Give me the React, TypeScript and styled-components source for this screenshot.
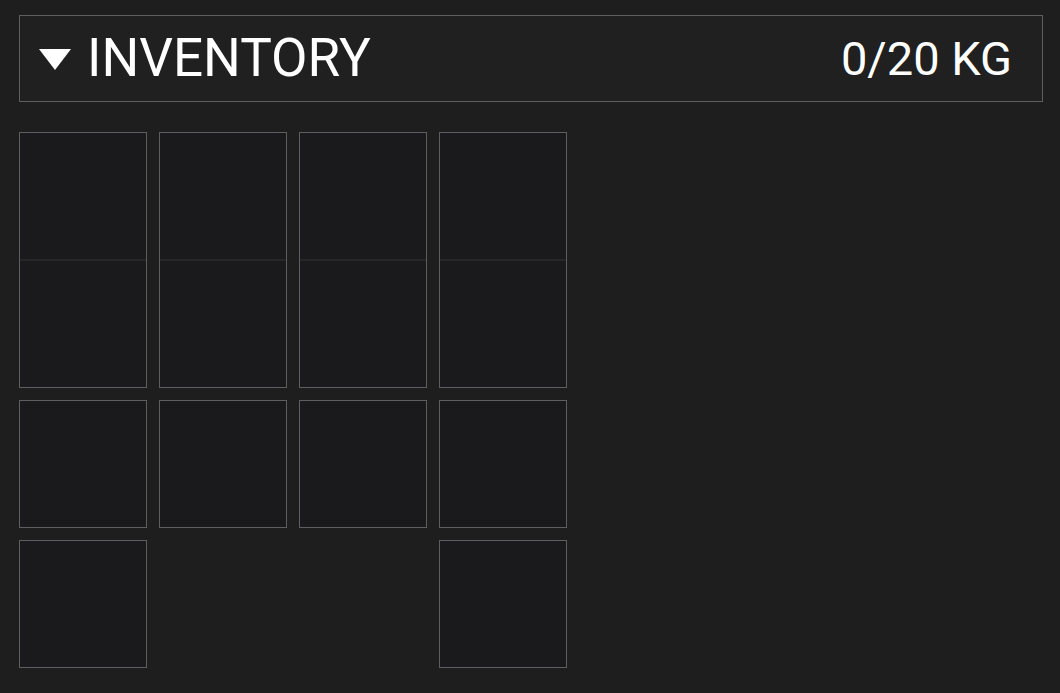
import React from 'react';
import styled, { createGlobalStyle } from 'styled-components';

const GlobalStyle = createGlobalStyle`
	html, body {
		margin: 0;
		padding: 0;
		background-color: #1e1e1e;
		font-family: Roboto, 'Liberation Sans', sans-serif;
	}
`;

// Styled components
const PageContainer = styled.div`
	width: 1060px;
	height: 693px;
	box-sizing: border-box;
	padding: 15px 17px 0 19px;
	background-color: #1e1e1e;
`;

const Header = styled.div`
	display: flex;
	align-items: center;
	justify-content: space-between;
	height: 87px;
	box-sizing: border-box;
	padding: 0 30px 0 19px;
	background-color: #202020;
	border: 1px solid #5e5e5e;
`;

const TitleGroup = styled.div`
	display: flex;
	align-items: center;
	gap: 16px;
`;

const Caret = styled.span`
	width: 0;
	height: 0;
	border-left: 16px solid transparent;
	border-right: 16px solid transparent;
	border-top: 21px solid #ffffff;
	margin-top: 2px;
`;

const Title = styled.span`
	color: #ffffff;
	font-size: 53px;
	font-weight: 400;
	line-height: 1;
`;

const Weight = styled.span`
	color: #ffffff;
	font-size: 47px;
	font-weight: 400;
	line-height: 1;
`;

const SlotGrid = styled.div`
	display: grid;
	grid-template-columns: repeat(4, 128px);
	gap: 12px;
	margin-top: 30px;
	align-items: start;
`;

const Slot = styled.div<{ $tall?: boolean }>`
	position: relative;
	width: 128px;
	height: ${({ $tall }) => ($tall ? '256px' : '128px')};
	box-sizing: border-box;
	background-color: #1a191b;
	border: 1px solid #5e5e5e;

	${({ $tall }) =>
		$tall &&
		`
		&::after {
			content: '';
			position: absolute;
			left: 0;
			right: 0;
			top: 126px;
			height: 2px;
			background-color: #262626;
		}
	`}
`;

const EmptyCell = styled.div`
	width: 128px;
	height: 128px;
`;

const rows: ('tall' | 'slot' | 'empty')[][] = [
	['tall', 'tall', 'tall', 'tall'],
	['slot', 'slot', 'slot', 'slot'],
	['slot', 'empty', 'empty', 'slot'],
];

export default function App() {
	return (
		<>
			<GlobalStyle />
			<PageContainer>
				<Header>
					<TitleGroup>
						<Caret />
						<Title>INVENTORY</Title>
					</TitleGroup>
					<Weight>0/20 KG</Weight>
				</Header>

				<SlotGrid>
					{rows.flatMap((row, r) =>
						row.map((kind, c) =>
							kind === 'empty' ? (
								<EmptyCell key={`${r}-${c}`} />
							) : (
								<Slot key={`${r}-${c}`} $tall={kind === 'tall'} />
							)
						)
					)}
				</SlotGrid>
			</PageContainer>
		</>
	);
}
